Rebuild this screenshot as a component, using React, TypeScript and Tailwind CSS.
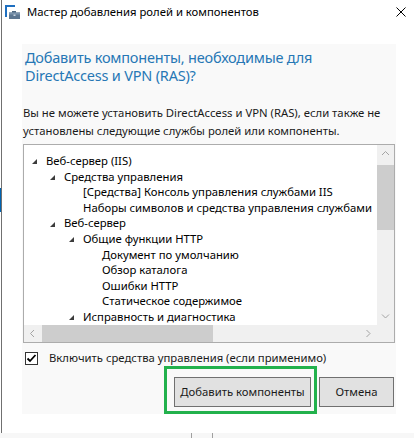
import React from "react";

const FONT = "font-['Noto_Sans',sans-serif]";

function Tri() {
  return (
    <svg width="5" height="5" viewBox="0 0 5 5" className="mt-[2px]">
      <polygon points="5,0 5,5 0,5" fill="#3c3c3c" />
    </svg>
  );
}

const LEVEL = ["pl-[8px]", "pl-[26px]", "pl-[45px]", "pl-[64px]"];

function Row({ level, text, open }: { level: number; text: string; open?: boolean }) {
  return (
    <div className={`flex items-center h-[15.6px] whitespace-nowrap ${LEVEL[level]}`}>
      <div className="w-[14px] shrink-0 flex items-center">{open ? <Tri /> : null}</div>
      <span className="text-[11.3px] leading-[15.6px] text-[#000]">{text}</span>
    </div>
  );
}

function Chevron({ dir }: { dir: "up" | "down" | "left" | "right" }) {
  const pts: Record<string, string> = {
    up: "1,5 4.5,1.5 8,5",
    down: "1,1.5 4.5,5 8,1.5",
    left: "5,1 1.5,4.5 5,8",
    right: "1.5,1 5,4.5 1.5,8",
  };
  const vertical = dir === "up" || dir === "down";
  return (
    <svg width={vertical ? 9 : 7} height={vertical ? 7 : 9} viewBox={vertical ? "0 0 9 7" : "0 0 7 9"}>
      <polyline points={pts[dir]} fill="none" stroke="#a3a3a3" strokeWidth="1" />
    </svg>
  );
}

export default function App() {
  return (
    <div className={`w-[414px] h-[438px] bg-white overflow-hidden flex flex-col ${FONT}`}>
      <div className="flex h-[433px]">
        <div className="w-px shrink-0 flex flex-col">
          <div className="mt-[188px] h-[24px] bg-[#0063b1]" />
        </div>
        <div className="flex-1 border-l border-[#707070] flex flex-col">
          {/* title bar */}
          <div className="h-[24px] flex items-center justify-between pl-[3px] pr-[8px]">
            <div className="flex items-center">
              <svg width="16" height="15" viewBox="0 0 16 15">
                <rect x="0" y="0" width="2" height="12" fill="#1e6fc0" />
                <rect x="0" y="0" width="10" height="2" fill="#1e6fc0" />
                <rect x="7" y="6" width="4" height="2" fill="#4d6780" />
                <rect x="4" y="7.5" width="11" height="6.5" fill="#5b7590" />
                <rect x="4" y="7.5" width="11" height="2" fill="#7b93ab" />
                <rect x="8.5" y="9.5" width="2" height="1.5" fill="#c9d6e2" />
              </svg>
              <span className="ml-[6px] text-[11.3px] text-black">Мастер добавления ролей и компонентов</span>
            </div>
            <svg width="10" height="10" viewBox="0 0 10 10">
              <line x1="0.5" y1="0.5" x2="9.5" y2="9.5" stroke="#000" strokeWidth="1" />
              <line x1="9.5" y1="0.5" x2="0.5" y2="9.5" stroke="#000" strokeWidth="1" />
            </svg>
          </div>

          {/* content panel */}
          <div className="mt-[20px] ml-[20px] w-[374px] h-[370px] bg-[#f9f9f9] flex flex-col">
            <div className="mt-[4px] pl-[3px] text-[14.5px] leading-[18px] tracking-[-0.2px] text-[#2677b5]">
              <div>Добавить компоненты, необходимые для</div>
              <div>DirectAccess и VPN (RAS)?</div>
            </div>
            <div className="mt-[20px] pl-[1px] text-[11.3px] leading-[18px] text-[#1a1a1a] whitespace-nowrap">
              <div>Вы не можете установить DirectAccess и VPN (RAS), если также не</div>
              <div>установлены следующие службы ролей или компоненты.</div>
            </div>

            {/* tree box */}
            <div className="mt-[4px] ml-[1px] w-[372px] h-[199px] border border-[#acacac] bg-white flex flex-col">
              <div className="flex h-[180px]">
                <div className="flex-1 overflow-hidden pt-[8px]">
                  <Row level={0} text="Веб-сервер (IIS)" open />
                  <Row level={1} text="Средства управления" open />
                  <Row level={2} text="[Средства] Консоль управления службами IIS" />
                  <Row level={2} text="Наборы символов и средства управления службами" />
                  <Row level={1} text="Веб-сервер" open />
                  <Row level={2} text="Общие функции HTTP" open />
                  <Row level={3} text="Документ по умолчанию" />
                  <Row level={3} text="Обзор каталога" />
                  <Row level={3} text="Ошибки HTTP" />
                  <Row level={3} text="Статическое содержимое" />
                  <Row level={2} text="Исправность и диагностика" open />
                </div>
                <div className="w-[17px] bg-[#f0f0f0] flex flex-col">
                  <div className="h-[17px] flex items-center justify-center">
                    <Chevron dir="up" />
                  </div>
                  <div className="mt-[3px] h-[65px] bg-[#cdcdcd]" />
                  <div className="flex-1" />
                  <div className="h-[17px] flex items-center justify-center">
                    <Chevron dir="down" />
                  </div>
                </div>
              </div>
              <div className="flex h-[17px] bg-[#f0f0f0]">
                <div className="w-[17px] flex items-center justify-center">
                  <Chevron dir="left" />
                </div>
                <div className="ml-[1px] w-[171px] bg-[#cdcdcd]" />
                <div className="flex-1" />
                <div className="w-[17px] flex items-center justify-center">
                  <Chevron dir="right" />
                </div>
                <div className="w-[17px] bg-[#f0f0f0]" />
              </div>
            </div>

            {/* checkbox */}
            <div className="mt-[9px] ml-[3px] flex items-center h-[13px]">
              <div className="w-[13px] h-[13px] border border-[#333] bg-white flex items-center justify-center">
                <svg width="11" height="11" viewBox="0 0 11 11">
                  <polyline points="1.5,5.5 4,8 9.5,2" fill="none" stroke="#000" strokeWidth="1.8" />
                </svg>
              </div>
              <span className="ml-[11px] text-[11.3px] text-[#1a1a1a]">Включить средства управления (если применимо)</span>
            </div>

            {/* buttons */}
            <div className="mt-[1px] flex items-start justify-end pr-[2px]">
              <div className="border-[3px] border-[#22b14c] pl-[7px] pt-[8px] pr-[3px] pb-[4px]">
                <button className="w-[137px] h-[30px] bg-[#e1e1e1] border border-[#707070] text-[11.3px] text-[#1a1a1a]">
                  Добавить компоненты
                </button>
              </div>
              <button className="ml-[2px] mt-[11px] w-[75px] h-[30px] bg-[#e1e1e1] border border-[#707070] text-[11.3px] text-[#1a1a1a]">
                Отмена
              </button>
            </div>
          </div>
        </div>
      </div>
      <div className="h-[5px] bg-[#f7f7f7] flex">
        <div className="ml-[191px] w-px bg-[#a0a0a0]" />
        <div className="ml-[20px] w-px bg-[#a0a0a0]" />
      </div>
    </div>
  );
}
